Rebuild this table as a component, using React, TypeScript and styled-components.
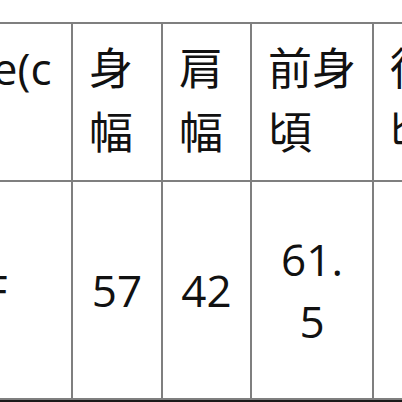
import React from 'react';
import styled, { createGlobalStyle } from 'styled-components';

const GlobalStyle = createGlobalStyle`
  html, body {
    margin: 0;
    padding: 0;
    background: #fff;
  }
`;

const Page = styled.div`
  width: 402px;
  height: 402px;
  overflow: hidden;
  background: #fff;
  font-family: "Open Sans", "Noto Sans CJK JP", sans-serif;
  color: #111;
`;

const Table = styled.div`
  display: grid;
  grid-template-columns: 150px 88px 87px 120px 120px;
  grid-template-rows: 156px 216px;
  gap: 2px;
  padding: 2px;
  background: #7f7f7f;
  margin-left: -81px;
  margin-top: 22px;
  width: max-content;
  border-bottom: 2px solid #1a1a1a;
`;

const HeadCell = styled.div`
  background: #fff;
  font-size: 44px;
  line-height: 64px;
  padding: 12px 15px 0 16px;
  word-break: break-all;
  text-align: left;
`;

const BodyCell = styled.div`
  background: #fff;
  font-size: 44px;
  line-height: 62px;
  padding: 0 18px;
  word-break: break-all;
  display: flex;
  align-items: center;
  justify-content: center;
  text-align: center;
`;

const headers = ['Size(cm)', '身幅', '肩幅', '前身頃', '後身頃'];
const values = ['F', '57', '42', '61.5', '64'];

export default function App() {
  return (
    <>
      <GlobalStyle />
      <Page>
        <Table>
          {headers.map((h) => (
            <HeadCell key={h}>{h}</HeadCell>
          ))}
          {values.map((v, i) => (
            <BodyCell key={i}>{v}</BodyCell>
          ))}
        </Table>
      </Page>
    </>
  );
}
